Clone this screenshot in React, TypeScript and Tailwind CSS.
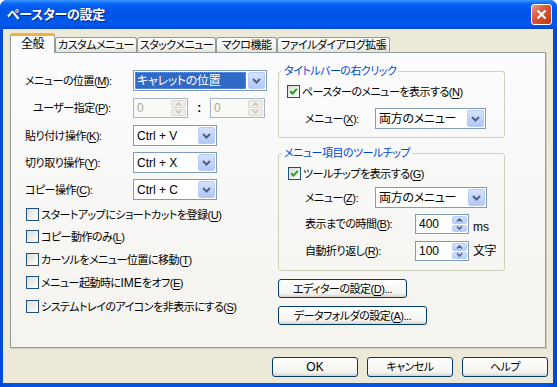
import type { ReactNode } from "react";

const font =
  "font-['Liberation_Sans','Noto_Sans_CJK_JP',sans-serif] [font-feature-settings:'palt']";

// latin text keeps the full size, kana are squeezed a bit like MS UI Gothic
const latin = "text-[12px] tracking-normal";

function Acc({ k }: { k: string }) {
  return (
    <>
      (<span className="underline underline-offset-[2px]">{k}</span>)
    </>
  );
}

function Chevron() {
  return (
    <svg width="9" height="6" viewBox="0 0 9 6">
      <path d="M1 1 L4.5 4.5 L8 1" fill="none" stroke="currentColor" strokeWidth="2" />
    </svg>
  );
}

function Combo({
  value,
  className,
  selected = false,
  isLatin = false,
}: {
  value: string;
  className: string;
  selected?: boolean;
  isLatin?: boolean;
}) {
  const size = isLatin ? latin : "text-[12px] tracking-[-0.3px]";
  return (
    <div className={`flex h-[21px] items-stretch border border-[#7F9DB9] bg-white p-[1px] ${className}`}>
      <div className="flex min-w-0 flex-1 items-center pr-[2px]">
        {selected ? (
          <span
            className={`flex h-full w-full items-center whitespace-nowrap border border-dotted border-[#CE953A] bg-[#316AC5] pl-[1px] text-white ${size}`}
          >
            {value}
          </span>
        ) : (
          <span className={`whitespace-nowrap pl-[2px] ${size}`}>{value}</span>
        )}
      </div>
      <div className="flex w-[17px] items-center justify-center rounded-[2px] border border-[#B9CCF8] bg-[linear-gradient(to_bottom,#D6E3FE,#B2C7F6)] text-[#4D6185]">
        <Chevron />
      </div>
    </div>
  );
}

function Arrow({ up, color }: { up: boolean; color: string }) {
  return (
    <svg width="7" height="4" viewBox="0 0 7 4">
      <path
        d={up ? "M1 3.5 L3.5 1 L6 3.5" : "M1 0.5 L3.5 3 L6 0.5"}
        fill="none"
        stroke={color}
        strokeWidth="1.6"
      />
    </svg>
  );
}

function Spin({
  value,
  className,
  disabled = false,
}: {
  value: string;
  className: string;
  disabled?: boolean;
}) {
  const btn = disabled
    ? "border-[#DCDAD0] bg-[#EFEEE7]"
    : "border-[#B9CCF8] bg-[linear-gradient(to_bottom,#D6E3FE,#B8CCF7)]";
  const arrow = disabled ? "#C9C7BA" : "#4D6185";
  return (
    <div
      className={`flex h-[20px] items-stretch border p-[1px] ${
        disabled ? "border-[#A5B5CB] bg-[#F9F9F6]" : "border-[#7F9DB9] bg-white"
      } ${className}`}
    >
      <span
        className={`flex flex-1 items-center pl-[2px] ${latin} ${disabled ? "text-[#ACA899]" : "text-black"}`}
      >
        {value}
      </span>
      <div className="flex w-[15px] flex-col gap-[1px]">
        <div className={`flex flex-1 items-center justify-center rounded-[2px] border ${btn}`}>
          <Arrow up color={arrow} />
        </div>
        <div className={`flex flex-1 items-center justify-center rounded-[2px] border ${btn}`}>
          <Arrow up={false} color={arrow} />
        </div>
      </div>
    </div>
  );
}

function Check({ checked = false }: { checked?: boolean }) {
  return (
    <span className="flex size-[13px] shrink-0 items-center justify-center border border-[#1C5180] bg-[linear-gradient(135deg,#DCDCD7,#FFFFFF)]">
      {checked && (
        <svg width="9" height="9" viewBox="0 0 9 9">
          <path d="M1.2 4.2 L3.5 6.6 L7.8 1.8" fill="none" stroke="#21A121" strokeWidth="2" />
        </svg>
      )}
    </span>
  );
}

function CheckRow({ checked, children, className = "" }: { checked?: boolean; children: ReactNode; className?: string }) {
  return (
    <div className={`flex h-[13px] items-center gap-[2px] ${className}`}>
      <Check checked={checked} />
      <span className="whitespace-nowrap leading-[14px]">{children}</span>
    </div>
  );
}

function XPButton({ children, className }: { children: ReactNode; className: string }) {
  return (
    <button
      type="button"
      className={`flex items-center justify-center whitespace-nowrap rounded-[3px] border border-[#003C74] bg-[linear-gradient(to_bottom,#FFFFFF,#F3F3EF_80%,#D8D2C6)] leading-[14px] text-black ${className}`}
    >
      {children}
    </button>
  );
}

function Tab({ label, className, active = false }: { label: string; className: string; active?: boolean }) {
  if (active) {
    return (
      <div
        className={`relative z-10 -mb-[1px] flex h-[20px] items-center justify-center whitespace-nowrap rounded-t-[3px] border-x border-t-[3px] border-x-[#919B9C] border-t-[#F5B13C] bg-[#FCFCFE] pb-[1px] ${className}`}
      >
        {label}
      </div>
    );
  }
  return (
    <div
      className={`flex h-[15px] items-center justify-center whitespace-nowrap rounded-t-[3px] border-x border-t border-[#919B9C] bg-[linear-gradient(to_bottom,#FFFFFF,#F1F1EC_70%,#E4E3DC)] ${className}`}
    >
      {label}
    </div>
  );
}

function Group({ title, className, children }: { title: string; className: string; children: ReactNode }) {
  return (
    <fieldset className={`rounded-[3px] border border-[#D0D0BF] ${className}`}>
      <legend className="ml-[3px] px-[2px] leading-[14px] text-[#0046D5]">{title}</legend>
      <div className="pl-[8px] pt-[7px]">{children}</div>
    </fieldset>
  );
}

export default function App() {
  return (
    <div className={`h-[387px] w-[557px] bg-white text-[11px] leading-[14px] tracking-[-0.5px] text-black ${font}`}>
      <div className="flex h-full flex-col rounded-t-[7px] bg-[linear-gradient(to_right,#0049D6,#0055E5_2%,#0055E5_98%,#0046D0)]">
        {/* title bar */}
        <div className="flex h-[29px] shrink-0 items-center rounded-t-[7px] bg-[linear-gradient(to_bottom,#3D95FF_0%,#0A6AF6_12%,#0058EE_25%,#0055E5_55%,#0059EC_85%,#0046D2_100%)] pl-[7px] pr-[5px]">
          <span className="flex-1 text-[13px] font-bold leading-[16px] tracking-[-0.3px] text-white [text-shadow:1px_1px_0_#0A1F83]">
            ペースターの設定
          </span>
          <div className="flex size-[21px] items-center justify-center rounded-[3px] border border-white bg-[linear-gradient(135deg,#F09C7F,#D9542F_45%,#C13A17)]">
            <svg width="11" height="11" viewBox="0 0 11 11">
              <path d="M1.5 1.5 L9.5 9.5 M9.5 1.5 L1.5 9.5" stroke="white" strokeWidth="2.2" />
            </svg>
          </div>
        </div>

        {/* client area */}
        <div className="mb-[4px] ml-[3px] mr-[4px] flex flex-1 flex-col bg-[#ECE9D8] pl-[7px]">
          <div className="mt-[4px] flex h-[19px] items-end">
            <Tab label="全般" className="w-[45px] text-[12px]" active />
            <Tab label="カスタムメニュー" className="w-[82px]" />
            <Tab label="スタックメニュー" className="w-[79px]" />
            <Tab label="マクロ機能" className="w-[61px]" />
            <Tab label="ファイルダイアログ拡張" className="w-[113px]" />
          </div>

          <div className="flex h-[296px] w-[536px] border border-[#919B9C] bg-[linear-gradient(to_bottom,#FCFCFE,#F4F3EE)] shadow-[1px_1px_0_#D0CEC3]">
            {/* left column */}
            <div className="flex w-[267px] flex-col pl-[14px] pt-[17px]">
              <div className="flex h-[21px] items-center">
                <span className="w-[108px]">
                  メニューの位置<Acc k="M" />:
                </span>
                <Combo value="キャレットの位置" className="w-[134px]" selected />
              </div>
              <div className="mt-[7px] flex h-[20px] items-center">
                <span className="w-[108px] pl-[8px]">
                  ユーザー指定<Acc k="P" />:
                </span>
                <Spin value="0" className="w-[55px]" disabled />
                <span className="w-[22px] text-center text-[12px] font-bold">:</span>
                <Spin value="0" className="w-[55px]" disabled />
              </div>
              <div className="mt-[7px] flex h-[21px] items-center">
                <span className="w-[108px]">
                  貼り付け操作<Acc k="K" />:
                </span>
                <Combo value="Ctrl + V" className="w-[84px]" isLatin />
              </div>
              <div className="mt-[6px] flex h-[21px] items-center">
                <span className="w-[108px]">
                  切り取り操作<Acc k="Y" />:
                </span>
                <Combo value="Ctrl + X" className="w-[84px]" isLatin />
              </div>
              <div className="mt-[6px] flex h-[21px] items-center">
                <span className="w-[108px]">
                  コピー操作<Acc k="C" />:
                </span>
                <Combo value="Ctrl + C" className="w-[84px]" isLatin />
              </div>

              <CheckRow className="ml-[1px] mt-[8px]">
                スタートアップにショートカットを登録<Acc k="U" />
              </CheckRow>
              <CheckRow className="ml-[1px] mt-[9px]">
                コピー動作のみ<Acc k="L" />
              </CheckRow>
              <CheckRow className="ml-[1px] mt-[10px]">
                カーソルをメニュー位置に移動<Acc k="T" />
              </CheckRow>
              <CheckRow className="ml-[1px] mt-[10px]">
                メニュー起動時に<span className={latin}>IME</span>をオフ<Acc k="E" />
              </CheckRow>
              <CheckRow className="ml-[1px] mt-[11px]">
                システムトレイのアイコンを非表示にする<Acc k="S" />
              </CheckRow>
            </div>

            {/* right column */}
            <div className="flex w-[227px] flex-col pt-[11px]">
              <Group title="タイトルバーの右クリック" className="h-[74px]">
                <CheckRow checked>
                  ペースターのメニューを表示する<Acc k="N" />
                </CheckRow>
                <div className="ml-[18px] mt-[10px] flex h-[21px] items-center">
                  <span className="w-[70px]">
                    メニュー<Acc k="X" />:
                  </span>
                  <Combo value="両方のメニュー" className="w-[111px]" />
                </div>
              </Group>

              <Group title="メニュー項目のツールチップ" className="mt-[8px] h-[125px]">
                <CheckRow checked className="ml-[1px]">
                  ツールチップを表示する<Acc k="G" />
                </CheckRow>
                <div className="ml-[18px] mt-[7px] flex h-[21px] items-center">
                  <span className="w-[70px]">
                    メニュー<Acc k="Z" />:
                  </span>
                  <Combo value="両方のメニュー" className="w-[112px]" />
                </div>
                <div className="ml-[18px] mt-[6px] flex h-[20px] items-center">
                  <span className="w-[110px]">
                    表示までの時間<Acc k="B" />:
                  </span>
                  <Spin value="400" className="w-[54px]" />
                  <span className={`ml-[4px] translate-y-[3px] ${latin}`}>ms</span>
                </div>
                <div className="ml-[18px] mt-[7px] flex h-[20px] items-center">
                  <span className="w-[110px]">
                    自動折り返し<Acc k="R" />:
                  </span>
                  <Spin value="100" className="w-[54px]" />
                  <span className="ml-[4px] text-[12px]">文字</span>
                </div>
              </Group>

              <XPButton className="mt-[8px] h-[19px] w-[129px]">
                エディターの設定<Acc k="D" />...
              </XPButton>
              <XPButton className="mt-[8px] h-[19px] w-[149px]">
                データフォルダの設定<Acc k="A" />...
              </XPButton>
            </div>
          </div>

          <div className="mr-[5px] mt-[9px] flex justify-end gap-[9px]">
            <XPButton className={`h-[20px] w-[86px] ${latin}`}>OK</XPButton>
            <XPButton className="h-[20px] w-[86px]">キャンセル</XPButton>
            <XPButton className="h-[20px] w-[86px]">ヘルプ</XPButton>
          </div>
        </div>
      </div>
    </div>
  );
}
